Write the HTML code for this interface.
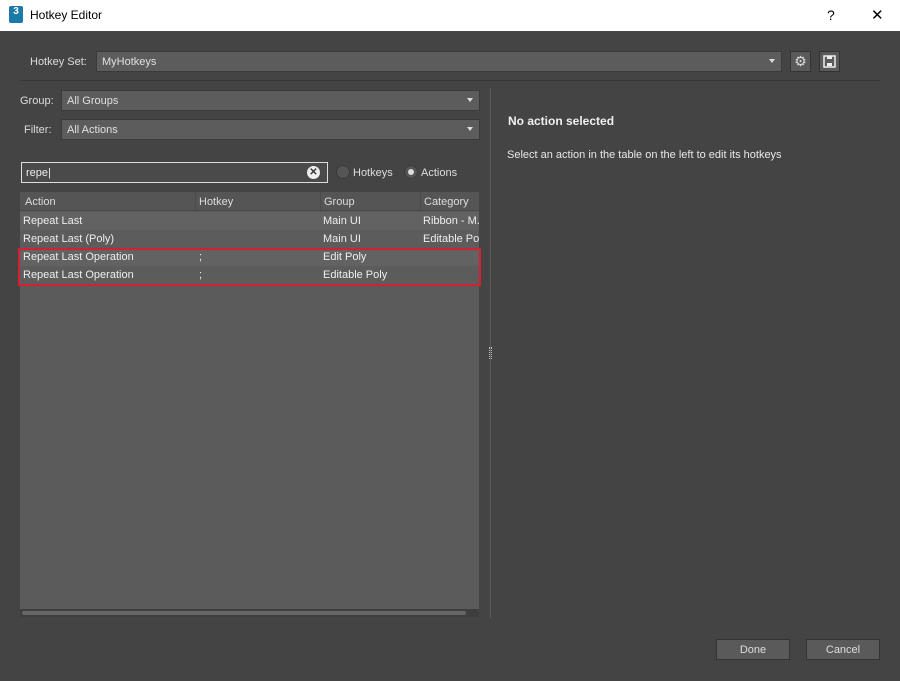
<!DOCTYPE html>
<html><head><style>
*{box-sizing:border-box;margin:0;padding:0}
body{width:900px;height:681px;background:#444;font-family:"Liberation Sans",sans-serif;font-size:11px;color:#ddd;position:relative;overflow:hidden}
.a{position:absolute;white-space:nowrap}
.combo{position:absolute;background:#5c5c5c;border:1px solid #3a3a3a;color:#e0e0e0;padding:4px 5px;height:21px}
.combo:after{content:"";position:absolute;right:6px;top:7px;border-left:3px solid transparent;border-right:3px solid transparent;border-top:4px solid #ddd}
.row{position:absolute;left:20px;width:459px;height:18px;line-height:18px;color:#eee;white-space:nowrap;overflow:hidden}
.row span{position:absolute;top:0;white-space:nowrap}
.btn{position:absolute;background:#5a5a5a;border:1px solid #333;color:#ddd;text-align:center;line-height:21px}
</style></head><body>
<div class="a" style="left:0;top:0;width:900px;height:31px;background:#fff;color:#000;font-size:12px">
 <div class="a" style="left:9px;top:6px;width:14px;height:17px;background:#1d7aa8;border-radius:2px;color:#fff;font-size:10px;font-weight:bold;text-align:center;line-height:12px">3</div>
 <div class="a" style="left:30px;top:8px">Hotkey Editor</div>
 <div class="a" style="left:827px;top:7px;font-size:14px">?</div>
 <div class="a" style="left:871px;top:6px;font-size:15px;font-weight:300">✕</div>
</div>
<div class="a" style="left:30px;top:56px">Hotkey Set:</div>
<div class="combo" style="left:96px;top:51px;width:686px">MyHotkeys</div>
<div class="btn" style="left:790px;top:51px;width:21px;height:21px;font-size:14px;line-height:18px">⚙</div>
<div class="btn" style="left:819px;top:51px;width:21px;height:21px">
<svg width="19" height="19" viewBox="0 0 19 19" style="position:absolute;left:0;top:0"><rect x="4" y="4" width="11" height="11" fill="none" stroke="#eee" stroke-width="1.5"/><rect x="7" y="4" width="5" height="3" fill="#eee"/><rect x="7" y="11" width="5" height="3" fill="#eee"/></svg></div>
<div class="a" style="left:20px;top:80px;width:860px;height:1px;background:#363636"></div>
<div class="a" style="left:20px;top:95px">Group:</div>
<div class="combo" style="left:61px;top:90px;width:419px">All Groups</div>
<div class="a" style="left:24px;top:124px">Filter:</div>
<div class="combo" style="left:61px;top:119px;width:419px">All Actions</div>
<div class="a" style="left:21px;top:162px;width:307px;height:21px;background:#4a4a4a;border:1px solid #ddd;padding:4px 4px;color:#eee">repe|</div>
<div class="a" style="left:307px;top:166px;width:13px;height:13px;border-radius:50%;background:#eee;color:#333;font-size:10px;font-weight:bold;text-align:center;line-height:13px">✕</div>
<div class="a" style="left:336px;top:165px;width:14px;height:14px;border-radius:50%;background:#555;border:1px solid #3a3a3a"></div>
<div class="a" style="left:353px;top:167px">Hotkeys</div>
<div class="a" style="left:404px;top:165px;width:14px;height:14px;border-radius:50%;background:#555;border:1px solid #3a3a3a"><div class="a" style="left:3px;top:3px;width:6px;height:6px;border-radius:50%;background:#ddd"></div></div>
<div class="a" style="left:421px;top:167px">Actions</div>
<div class="a" style="left:20px;top:192px;width:459px;height:425px;background:#5b5b5b"></div>
<div class="a" style="left:20px;top:192px;width:459px;height:19px;background:#555;border-bottom:1px solid #4a4a4a"></div>
<div class="row" style="top:193px;color:#ddd"><span style="left:5px">Action</span><span style="left:179px">Hotkey</span><span style="left:304px">Group</span><span style="left:404px">Category</span></div>
<div class="a" style="left:195px;top:192px;width:1px;height:92px;background:#4a4a4a"></div>
<div class="a" style="left:320px;top:192px;width:1px;height:92px;background:#4a4a4a"></div>
<div class="a" style="left:420px;top:192px;width:1px;height:92px;background:#4a4a4a"></div>
<div class="row" style="top:212px;background:#626262"><span style="left:3px">Repeat Last</span><span style="left:303px">Main UI</span><span style="left:403px">Ribbon - M.</span></div>
<div class="row" style="top:230px;background:#5c5c5c"><span style="left:3px">Repeat Last (Poly)</span><span style="left:303px">Main UI</span><span style="left:403px">Editable Po.</span></div>
<div class="row" style="top:248px;background:#626262"><span style="left:3px">Repeat Last Operation</span><span style="left:179px">;</span><span style="left:303px">Edit Poly</span></div>
<div class="row" style="top:266px;background:#5c5c5c"><span style="left:3px">Repeat Last Operation</span><span style="left:179px">;</span><span style="left:303px">Editable Poly</span></div>
<div class="a" style="left:18px;top:248px;width:463px;height:38px;border:2px solid #d42030"></div>
<div class="a" style="left:20px;top:609px;width:459px;height:8px;background:#3e3e3e"></div>
<div class="a" style="left:22px;top:611px;width:444px;height:4px;background:#666;border-radius:2px"></div>
<div class="a" style="left:490px;top:88px;width:1px;height:530px;background:#5a5a5a"></div>
<div class="a" style="left:489px;top:347px;width:3px;height:12px;border-left:1px dotted #bbb;border-right:1px dotted #bbb"></div>
<div class="a" style="left:508px;top:114px;font-size:12px;font-weight:bold;color:#f0f0f0">No action selected</div>
<div class="a" style="left:507px;top:149px;color:#e8e8e8">Select an action in the table on the left to edit its hotkeys</div>
<div class="btn" style="left:716px;top:639px;width:74px;height:21px">Done</div>
<div class="btn" style="left:806px;top:639px;width:74px;height:21px">Cancel</div>
</body></html>
